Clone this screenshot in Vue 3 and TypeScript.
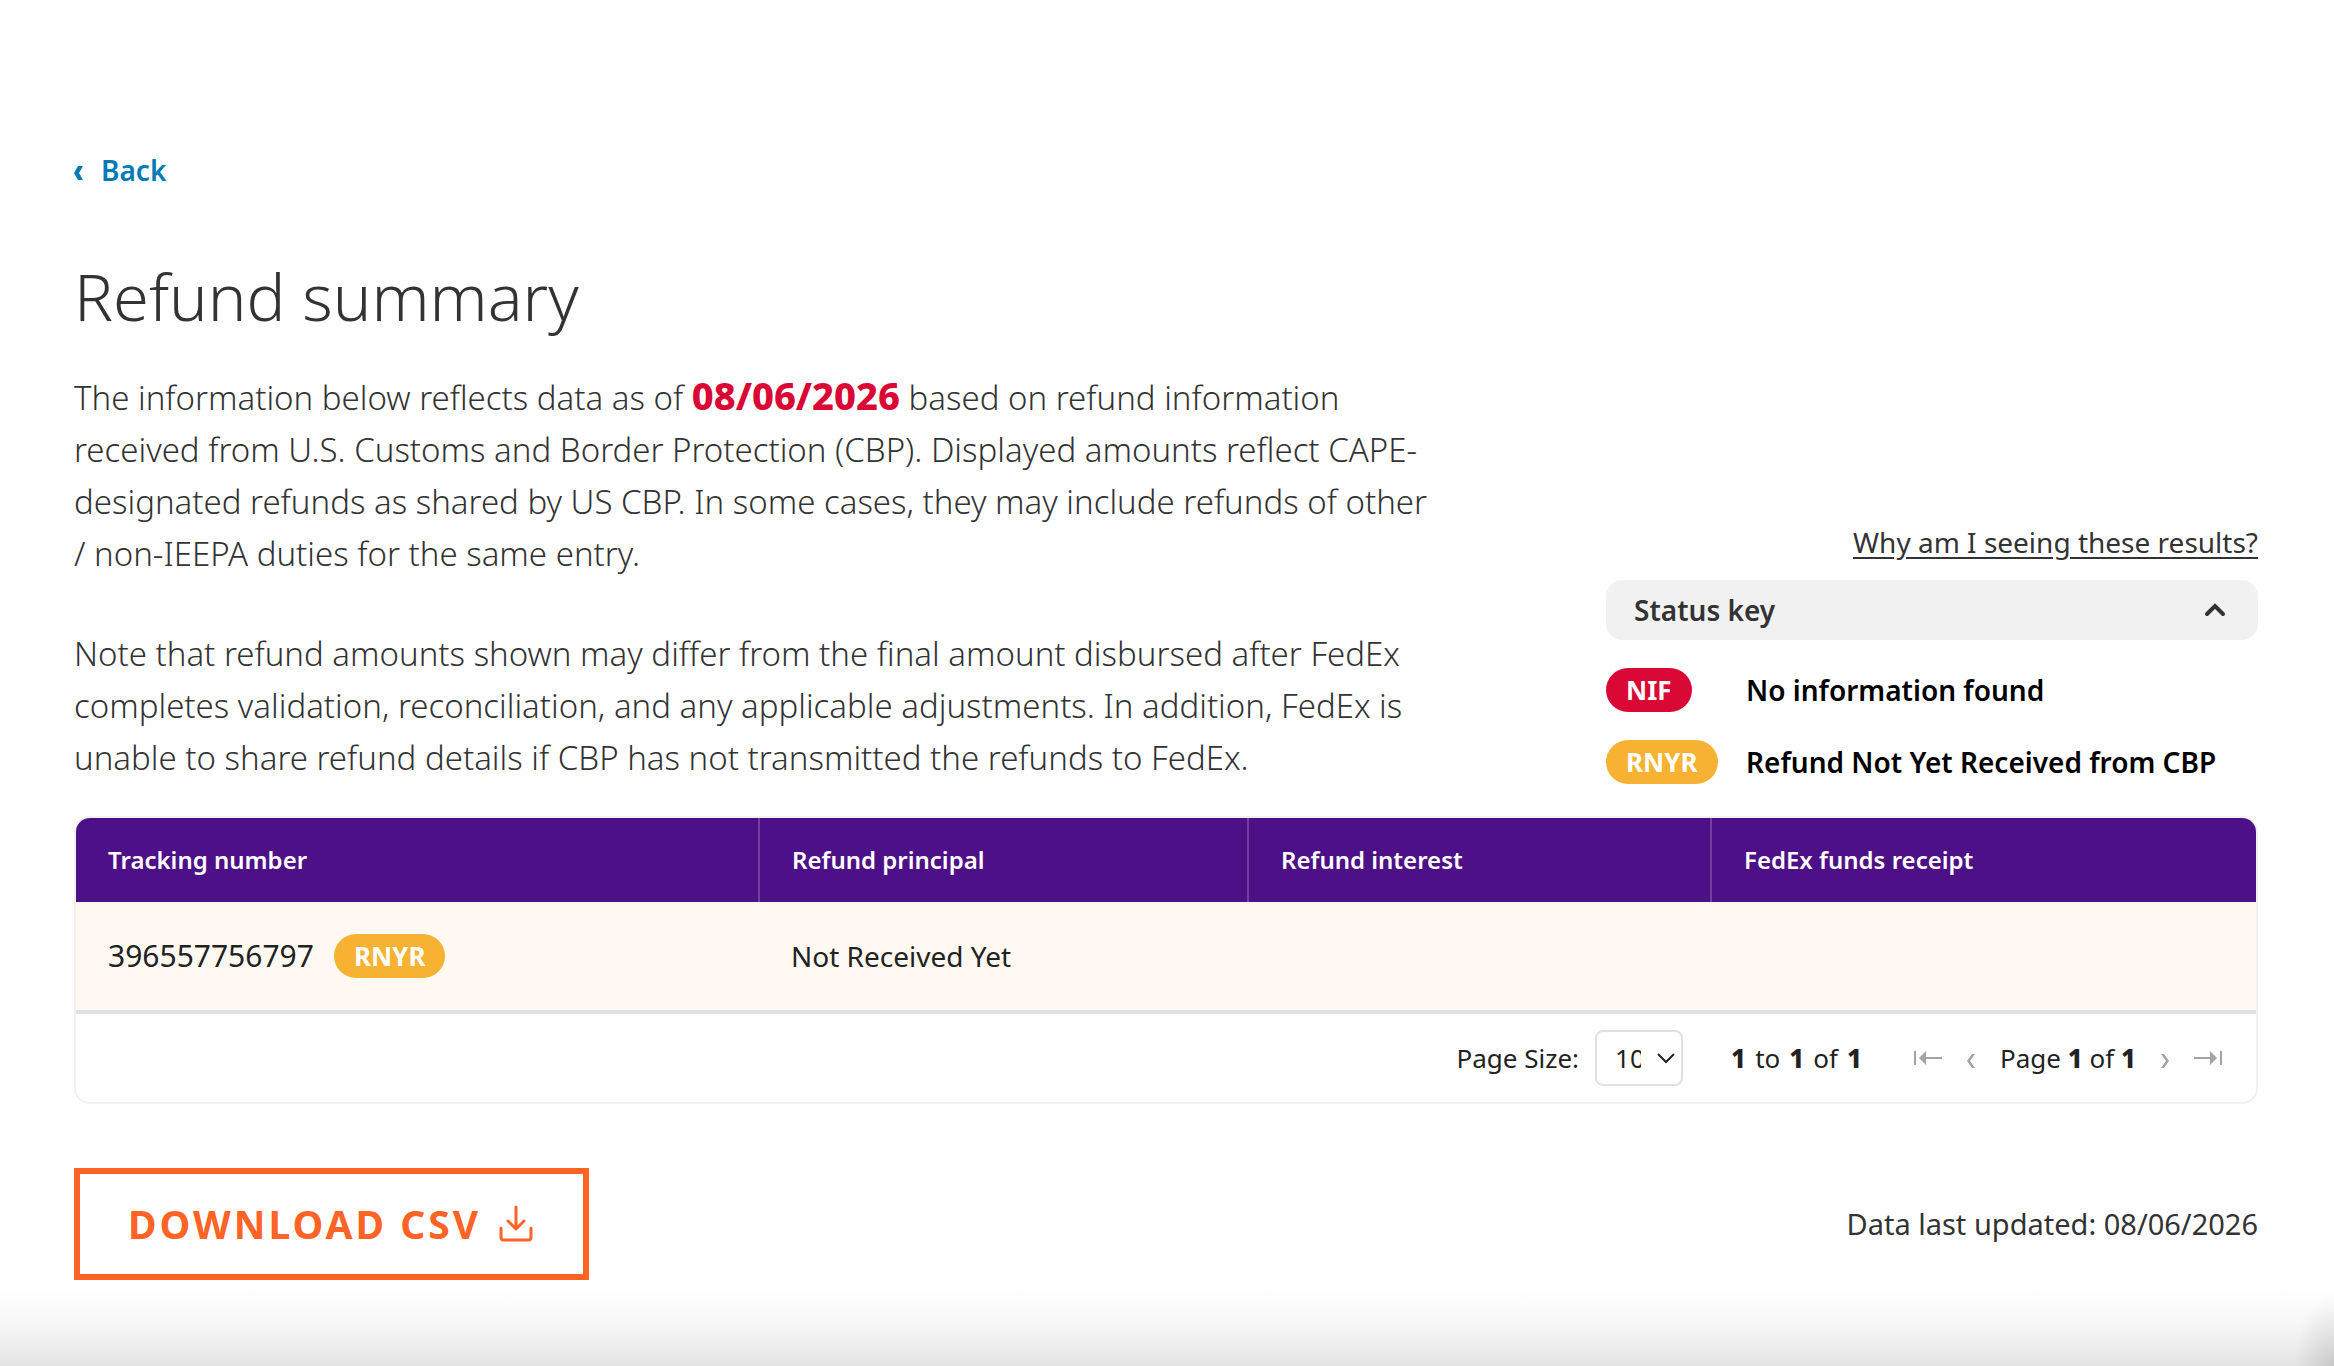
<script setup lang="ts">
import { ref } from 'vue'

interface Status {
  code: string
  label: string
  tone: 'red' | 'amber'
}

interface RefundRow {
  tracking: string
  status: Status
  principal: string
  interest: string
  receipt: string
}

const asOf = '08/06/2026'
const keyOpen = ref(true)
const pageSize = ref(10)

const statuses: Status[] = [
  { code: 'NIF', label: 'No information found', tone: 'red' },
  { code: 'RNYR', label: 'Refund Not Yet Received from CBP', tone: 'amber' },
]

const columns = ['Tracking number', 'Refund principal', 'Refund interest', 'FedEx funds receipt']

const rows: RefundRow[] = [
  {
    tracking: '396557756797',
    status: statuses[1],
    principal: 'Not Received Yet',
    interest: '',
    receipt: '',
  },
]
</script>

<template>
  <main class="page">
    <nav>
      <a class="back" href="#">
        <svg width="9" height="14" viewBox="0 0 9 14" aria-hidden="true">
          <path d="M4 0H9L5 7L9 14H4L0 7Z" fill="currentColor" />
        </svg>
        Back
      </a>
    </nav>

    <h1>Refund summary</h1>

    <section class="intro">
      <div class="copy">
        <p>
          The information below reflects data as of <strong>{{ asOf }}</strong> based on refund
          information received from U.S. Customs and Border Protection (CBP). Displayed amounts
          reflect CAPE-designated refunds as shared by US CBP. In some cases, they may include
          refunds of other /&nbsp;non-IEEPA duties for the same entry.
        </p>
        <p>
          Note that refund amounts shown may differ from the final amount disbursed after FedEx
          completes validation, reconciliation, and any applicable adjustments. In addition, FedEx
          is unable to share refund details if CBP has not transmitted the refunds to FedEx.
        </p>
      </div>

      <aside class="key">
        <a class="why" href="#">Why am I seeing these results?</a>
        <button class="key-toggle" type="button" :aria-expanded="keyOpen" @click="keyOpen = !keyOpen">
          Status key
          <svg width="22" height="14" viewBox="0 0 22 14" aria-hidden="true">
            <path d="M3 11L11 3L19 11" fill="none" stroke="currentColor" stroke-width="4" stroke-linecap="round" />
          </svg>
        </button>
        <dl v-if="keyOpen" class="key-list">
          <div v-for="s in statuses" :key="s.code" class="key-row">
            <dt><span class="pill" :class="s.tone">{{ s.code }}</span></dt>
            <dd>{{ s.label }}</dd>
          </div>
        </dl>
      </aside>
    </section>

    <section class="grid">
      <table>
        <colgroup>
          <col class="c1" />
          <col class="c2" />
          <col class="c3" />
          <col class="c4" />
        </colgroup>
        <thead>
          <tr>
            <th v-for="c in columns" :key="c" scope="col">{{ c }}</th>
          </tr>
        </thead>
        <tbody>
          <tr v-for="r in rows" :key="r.tracking">
            <td>
              <div class="tracking">
                <span class="number">{{ r.tracking }}</span>
                <span class="pill" :class="r.status.tone">{{ r.status.code }}</span>
              </div>
            </td>
            <td>{{ r.principal }}</td>
            <td>{{ r.interest }}</td>
            <td>{{ r.receipt }}</td>
          </tr>
        </tbody>
      </table>

      <div class="pager">
        <div class="size">
          <label for="page-size">Page Size:</label>
          <span class="select">
            <select id="page-size" v-model="pageSize">
              <option :value="10">10</option>
              <option :value="20">20</option>
              <option :value="50">50</option>
            </select>
            <svg width="18" height="12" viewBox="0 0 18 12" aria-hidden="true">
              <path d="M1 2L9 10L17 2" fill="none" stroke="currentColor" stroke-width="2" />
            </svg>
          </span>
        </div>
        <span class="range"><b>1</b><span>to</span><b>1</b><span>of</span><b>1</b></span>
        <div class="steps">
          <button type="button" disabled aria-label="First page">
            <svg width="28" height="14" viewBox="0 0 28 14" aria-hidden="true">
              <path d="M1 0V14M9 7H28" stroke="currentColor" stroke-width="2" />
              <path d="M5 7L12 0V14Z" fill="currentColor" />
            </svg>
          </button>
          <button type="button" class="single" disabled aria-label="Previous page">
            <svg width="8" height="14" viewBox="0 0 8 14" aria-hidden="true">
              <path d="M5 0H8L3 7L8 14H5L0 7Z" fill="currentColor" />
            </svg>
          </button>
          <span class="position">Page <b>1</b> of <b>1</b></span>
          <button type="button" class="single" disabled aria-label="Next page">
            <svg width="8" height="14" viewBox="0 0 8 14" aria-hidden="true">
              <path d="M3 0H0L5 7L0 14H3L8 7Z" fill="currentColor" />
            </svg>
          </button>
          <button type="button" disabled aria-label="Last page">
            <svg width="28" height="14" viewBox="0 0 28 14" aria-hidden="true">
              <path d="M27 0V14M0 7H19" stroke="currentColor" stroke-width="2" />
              <path d="M23 7L16 0V14Z" fill="currentColor" />
            </svg>
          </button>
        </div>
      </div>
    </section>

    <footer class="actions">
      <button class="download" type="button">
        Download CSV
        <svg width="34" height="38" viewBox="0 0 34 38" aria-hidden="true">
          <path
            d="M17 2V24M9 16L17 24L25 16M2 23V32Q2 35 5 35H29Q32 35 32 32V23"
            fill="none"
            stroke="currentColor"
            stroke-width="3"
            stroke-linecap="round"
            stroke-linejoin="round"
          />
        </svg>
      </button>
      <span class="updated">Data last updated: {{ asOf }}</span>
    </footer>
  </main>
</template>

<style>
body {
  margin: 0;
  background: #fff;
}
</style>

<style scoped>
.page {
  box-sizing: border-box;
  min-height: 100vh;
  padding: 151px 76px 84px 74px;
  color: #333;
  font-family: 'Noto Sans', 'Open Sans', sans-serif;
  font-size: 28px;
  line-height: 36px;
  background:
    radial-gradient(40px 72px at 100% 100%, rgba(0, 0, 0, 0.12), rgba(0, 0, 0, 0)),
    linear-gradient(to top, #e4e4e4, #f1f1f1 28px, #fbfbfb 56px, rgba(255, 255, 255, 0) 84px);
}

a,
button,
select {
  color: inherit;
  font: inherit;
}

.back {
  display: inline-flex;
  align-items: center;
  gap: 18px;
  color: #007ab7;
  font-weight: 600;
  text-decoration: none;
}

.back svg {
  margin-top: 6px;
}

h1 {
  margin: 66px 0 0;
  font-size: 65px;
  font-weight: 300;
  line-height: 84px;
}

.intro {
  display: flex;
  justify-content: space-between;
  align-items: flex-end;
  margin-top: 34px;
}

.copy {
  width: 1360px;
  font-size: 33px;
  font-weight: 300;
  line-height: 52px;
}

.copy p {
  margin: 0 0 32px;
}

.copy p + p {
  margin-top: 48px;
}

.copy strong {
  color: #da0835;
  font-size: 38px;
  font-weight: 800;
  line-height: 36px;
}

.key {
  display: flex;
  flex-direction: column;
  width: 652px;
  margin-bottom: 32px;
}

.why {
  align-self: flex-end;
  text-underline-offset: 4px;
}

.key-toggle {
  display: flex;
  justify-content: space-between;
  align-items: center;
  height: 60px;
  margin-top: 20px;
  padding: 0 32px 0 28px;
  border: 0;
  border-radius: 16px;
  background: #f1f1f1;
  font-weight: 600;
}

.key-list {
  display: flex;
  flex-direction: column;
  gap: 28px;
  margin: 28px 0 0;
}

.key-row {
  display: grid;
  grid-template-columns: 140px 1fr;
  align-items: center;
  height: 44px;
  color: #000;
  font-weight: 600;
}

.key-row dt,
.key-row dd {
  display: flex;
  margin: 0;
}

.pill {
  padding: 0 20px;
  border-radius: 22px;
  color: #fff;
  font-size: 26px;
  font-weight: 700;
  line-height: 44px;
}

.red {
  background: #da0835;
}

.amber {
  background: #f7b233;
}

.grid {
  overflow: hidden;
  border: 2px solid #f1f1f1;
  border-radius: 16px;
  color: #222;
}

table {
  width: 100%;
  border-collapse: collapse;
  table-layout: fixed;
}

.c1 {
  width: 683px;
}

.c2 {
  width: 489px;
}

.c3 {
  width: 463px;
}

th {
  box-sizing: border-box;
  height: 84px;
  padding: 0 32px;
  border-right: 2px solid #73419c;
  background: #4d1087;
  color: #fff;
  font-size: 24px;
  font-weight: 600;
  text-align: left;
}

th:last-child {
  border-right: 0;
}

td {
  height: 108px;
  padding: 0 32px;
  background: #fff9f2;
}

tbody {
  border-bottom: 4px solid #e0e0de;
}

.tracking {
  display: flex;
  align-items: center;
  gap: 20px;
}

.number {
  font-size: 30px;
}

.pager {
  display: flex;
  justify-content: flex-end;
  align-items: center;
  height: 88px;
  padding-right: 34px;
  font-size: 26px;
}

.size {
  display: flex;
  align-items: center;
  gap: 16px;
}

.select {
  position: relative;
  display: flex;
}

select {
  box-sizing: border-box;
  width: 88px;
  height: 56px;
  padding: 0 40px 0 18px;
  border: 2px solid #e0e0e0;
  border-radius: 8px;
  background: #fff;
  appearance: none;
}

.select svg {
  position: absolute;
  right: 8px;
  top: 22px;
  pointer-events: none;
}

.range {
  display: flex;
  gap: 9px;
  margin-left: 48px;
}

.steps {
  display: flex;
  align-items: center;
  margin-left: 52px;
}

.steps button {
  display: flex;
  padding: 0;
  border: 0;
  background: none;
  color: #a3a3a3;
}

.steps .single {
  margin: 6px 25px 0;
}

b {
  font-weight: 800;
}

.actions {
  display: flex;
  justify-content: space-between;
  align-items: center;
  margin-top: 64px;
}

.download {
  display: flex;
  align-items: center;
  gap: 18px;
  height: 112px;
  padding: 0 50px 0 48px;
  border: 6px solid #ff6426;
  background: #fff;
  color: #ff6426;
  font-size: 39px;
  font-weight: 700;
  letter-spacing: 3px;
  text-transform: uppercase;
}

.updated {
  font-size: 29px;
}
</style>
